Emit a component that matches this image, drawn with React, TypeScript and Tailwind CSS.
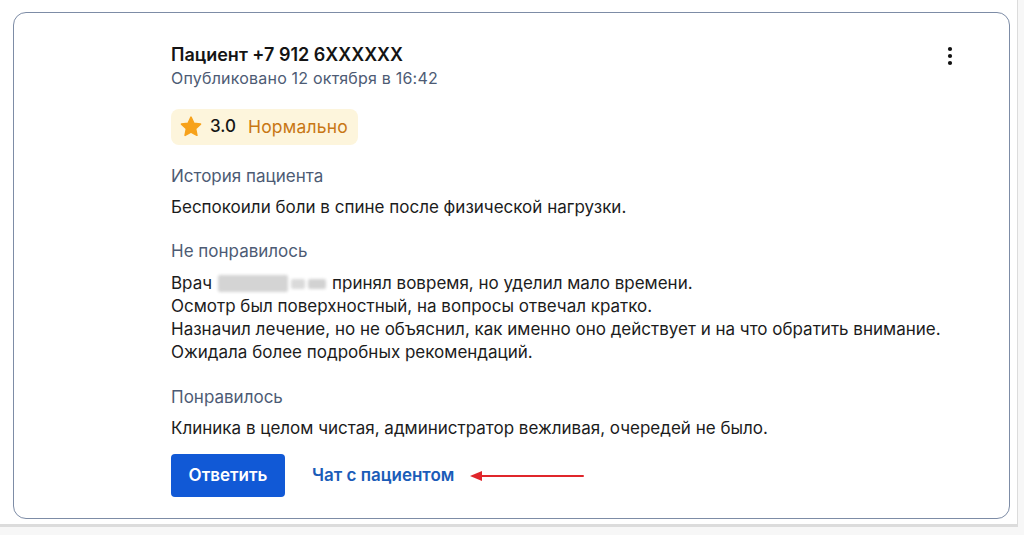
import React from "react";

function Star() {
  return (
    <svg width="24" height="24" viewBox="0 0 24 24" aria-hidden="true">
      <path
        d="M12 2.2l2.9 6.1 6.6.8-4.9 4.6 1.3 6.6L12 17l-5.9 3.3 1.3-6.6-4.9-4.6 6.6-.8z"
        fill="#f7a21b"
        stroke="#f7a21b"
        strokeWidth="1.6"
        strokeLinejoin="round"
      />
    </svg>
  );
}

function Kebab() {
  return (
    <svg width="8" height="20" viewBox="0 0 8 20" aria-hidden="true">
      <circle cx="4" cy="3" r="2.1" fill="#111" />
      <circle cx="4" cy="10" r="2.1" fill="#111" />
      <circle cx="4" cy="17" r="2.1" fill="#111" />
    </svg>
  );
}

function Arrow() {
  return (
    <svg width="118" height="14" viewBox="0 0 118 14" aria-hidden="true">
      <line x1="10" y1="7" x2="115" y2="7" stroke="#e0262b" strokeWidth="2" strokeLinecap="round" />
      <path d="M2 7 L14 2 L14 12 Z" fill="#e0262b" />
    </svg>
  );
}

export default function App() {
  return (
    <div
      className="w-[1024px] h-[535px] bg-[#f7f7f7] overflow-hidden"
      style={{ fontFamily: 'Inter, "Noto Sans", sans-serif' }}
    >
      <div className="w-[1018px] h-[527px] bg-white border-b-[3px] border-r border-[#dcdcdc] pl-[13px] pt-[12px]">
        <div className="w-[997px] h-[507px] border-[1.5px] border-[#7d8ca6] rounded-[13px] bg-white flex">
          <div className="flex-1 pl-[157px] pt-[31px]">
            <div className="text-[18px] leading-[22px] font-semibold text-[#141414]">
              Пациент +7 912 6XXXXXX
            </div>
            <div className="mt-[2px] text-[16px] leading-[20px] tracking-[0.2px] text-[#4d5b74]">
              Опубликовано 12 октября в 16:42
            </div>
            <div className="mt-[21px] inline-flex items-center h-[36px] pl-[8px] pr-[10px] rounded-[8px] bg-[#fdf5dc]">
              <Star />
              <span className="ml-[7px] text-[17px] font-medium text-[#151515]">3.0</span>
              <span className="ml-[12px] text-[17.5px] tracking-[0.2px] text-[#c87714]">Нормально</span>
            </div>

            <div className="mt-[20px] text-[17px] leading-[22px] text-[#4d5b74]">История пациента</div>
            <div className="mt-[9px] text-[17px] leading-[22px] text-[#1c1c1c]">
              Беспокоили боли в спине после физической нагрузки.
            </div>

            <div className="mt-[22px] text-[17px] leading-[22px] text-[#4d5b74]">Не понравилось</div>
            <div className="mt-[10px] text-[17px] leading-[23px] text-[#1c1c1c]">
              <div className="flex items-center">
                <span>Врач</span>
                <span className="mx-[6px] inline-flex items-center gap-[3px] blur-[1.5px]">
                  <span className="w-[70px] h-[17px] bg-[#d4d4d4] rounded-[2px]" />
                  <span className="w-[14px] h-[10px] bg-[#dadada] rounded-[2px]" />
                  <span className="w-[18px] h-[10px] bg-[#d2d2d2] rounded-[2px]" />
                </span>
                <span>принял вовремя, но уделил мало времени.</span>
              </div>
              <div>Осмотр был поверхностный, на вопросы отвечал кратко.</div>
              <div>Назначил лечение, но не объяснил, как именно оно действует и на что обратить внимание.</div>
              <div>Ожидала более подробных рекомендаций.</div>
            </div>

            <div className="mt-[22px] text-[17px] leading-[22px] text-[#4d5b74]">Понравилось</div>
            <div className="mt-[9px] text-[17px] leading-[22px] text-[#1c1c1c]">
              Клиника в целом чистая, администратор вежливая, очередей не было.
            </div>

            <div className="mt-[15px] flex items-center">
              <button className="w-[114px] h-[43px] rounded-[4px] bg-[#1159d6] text-white text-[17px] font-semibold">
                Ответить
              </button>
              <span className="ml-[27px] text-[17px] font-semibold text-[#1a5cb8]">Чат с пациентом</span>
              <span className="ml-[14px] flex items-center">
                <Arrow />
              </span>
            </div>
          </div>
          <div className="pt-[33px] pr-[55px]">
            <Kebab />
          </div>
        </div>
      </div>
    </div>
  );
}
